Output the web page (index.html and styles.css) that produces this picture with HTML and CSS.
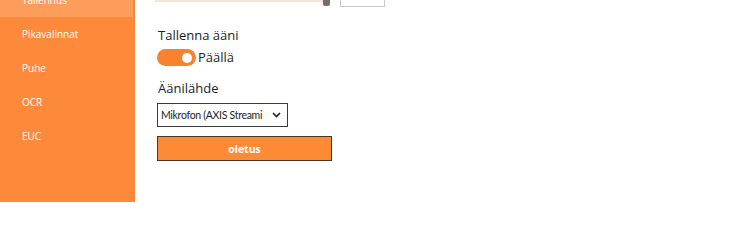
FILE: index.html
```html
<!DOCTYPE html>
<html lang="fi">
<head>
<meta charset="utf-8">
<title>Asetukset</title>
<link rel="stylesheet" href="styles.css">
</head>
<body>
<div class="app">
  <nav class="sidebar">
    <ul class="nav">
      <li class="nav-item active">Tallennus</li>
      <li class="nav-item">Pikavalinnat</li>
      <li class="nav-item">Puhe</li>
      <li class="nav-item">OCR</li>
      <li class="nav-item">EUC</li>
    </ul>
  </nav>
  <main class="content">
    <div class="slider-row">
      <div class="track"></div>
      <div class="thumb"></div>
      <div class="value-box"></div>
    </div>
    <div class="label first">Tallenna ääni</div>
    <div class="toggle-row">
      <div class="toggle"><span class="knob"></span></div>
      <span class="toggle-text">Päällä</span>
    </div>
    <div class="label second">Äänilähde</div>
    <div class="select">
      <span class="select-text">Mikrofon (AXIS Streami</span>
      <svg class="chevron" width="9" height="6" viewBox="0 0 9 6"><path d="M1 1 L4.5 4.5 L8 1" fill="none" stroke="#222" stroke-width="1.6"/></svg>
    </div>
    <button class="btn">oletus</button>
  </main>
</div>
</body>
</html>
```
FILE: styles.css
```css
html, body {
  margin: 0;
  padding: 0;
  height: 100%;
  overflow: hidden;
  background: #ffffff;
}
body {
  font-family: "Open Sans", "Noto Sans", sans-serif;
  color: #1e1e1e;
}
.app {
  display: flex;
  height: 202px;
}
.sidebar {
  width: 133px;
  flex: none;
  background: #fc8a3a;
  border-right: 2px solid #f2883f;
  overflow: hidden;
}
.nav {
  list-style: none;
  margin: -17px 0 0 0;
  padding: 0;
}
.nav-item {
  height: 34px;
  line-height: 34px;
  padding-left: 22px;
  font-size: 10px;
  color: #ffffff;
}
.nav-item.active {
  background: #fd9d5b;
}
.content {
  flex: 1;
  padding-left: 22px;
  display: flex;
  flex-direction: column;
  align-items: flex-start;
}
.slider-row {
  display: flex;
  align-items: flex-start;
  height: 8px;
}
.track {
  margin-left: -2px;
  width: 168px;
  height: 2px;
  background: #fbe3d4;
}
.thumb {
  width: 7px;
  height: 6px;
  background: #707070;
  border-radius: 0 0 2px 2px;
}
.value-box {
  margin-left: 10px;
  width: 43px;
  height: 6px;
  border: 1px solid #c9c9c9;
  border-top: none;
}
.label {
  font-size: 13px;
  line-height: 18px;
  padding-left: 1px;
}
.label.first { margin-top: 18px; }
.label.second { margin-top: 13px; }
.toggle-row {
  display: flex;
  align-items: center;
  height: 17px;
  margin-top: 5px;
  gap: 2px;
}
.toggle {
  width: 39px;
  height: 17px;
  border-radius: 9px;
  background: #f7822f;
  display: flex;
  align-items: center;
  justify-content: flex-end;
  padding-right: 4px;
  box-sizing: border-box;
}
.knob {
  width: 10px;
  height: 10px;
  border-radius: 50%;
  background: #ffffff;
}
.toggle-text {
  font-size: 13px;
  line-height: 17px;
}
.select {
  margin-top: 6px;
  width: 131px;
  height: 24px;
  box-sizing: border-box;
  border: 1px solid #3a3a3a;
  display: flex;
  align-items: center;
  padding-left: 3px;
  padding-right: 6px;
}
.select-text {
  font-family: "Lato", "Open Sans", sans-serif;
  font-size: 10.5px;
  letter-spacing: -0.3px;
  white-space: nowrap;
  flex: none;
}
.chevron {
  margin-left: auto;
}
.btn {
  margin-top: 9px;
  width: 175px;
  height: 25px;
  background: #fd8a35;
  border: 1px solid #4a3426;
  color: #ffffff;
  font-family: "Open Sans", "Noto Sans", sans-serif;
  font-weight: 700;
  font-size: 10.5px;
  padding: 0;
}
```
